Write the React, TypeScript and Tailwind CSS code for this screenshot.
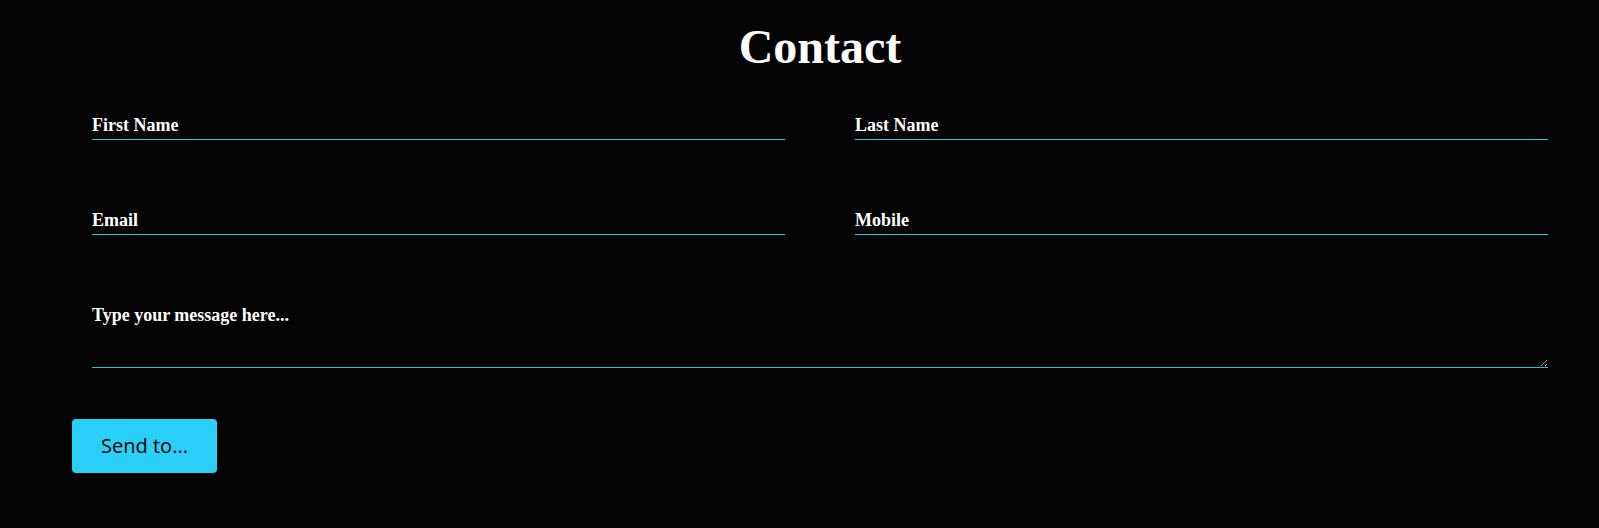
import React from 'react';

const serif = "font-['Liberation_Serif','Times_New_Roman',serif]";

function Field({ placeholder }: { placeholder: string }) {
  return (
    <input
      type="text"
      placeholder={placeholder}
      className={`block w-full h-[25px] bg-transparent border-0 border-b border-[#2bc3ea] outline-none px-0 pt-0 pb-[4px] text-[18px] leading-[20px] font-bold text-white placeholder:text-white placeholder:opacity-100 ${serif}`}
    />
  );
}

export default function App() {
  return (
    <section className="min-h-[528px] bg-[#040404] pl-[72px] pr-[51px] pt-[20px]">
      <div className="pl-[20px]">
        <h1 className={`text-center text-[48px] leading-[53px] font-bold text-white ${serif}`}>Contact</h1>

        <form className="mt-[42px]">
          <div className="grid grid-cols-2 gap-x-[70px] gap-y-[70px]">
            <Field placeholder="First Name" />
            <Field placeholder="Last Name" />
            <Field placeholder="Email" />
            <Field placeholder="Mobile" />
          </div>
          <textarea
            placeholder="Type your message here..."
            className={`block mt-[70px] w-full h-[63px] bg-transparent border-0 border-b border-[#2bc3ea] outline-none p-0 text-[18px] leading-[20px] font-bold text-white placeholder:text-white placeholder:opacity-100 ${serif}`}
          />
        </form>
      </div>

      <button
        type="button"
        className="block mt-[51px] w-[145px] h-[54px] rounded-[4px] bg-[#2ad0f7] text-black text-[20px] leading-none font-['Open_Sans',Tahoma,sans-serif]"
      >
        Send to...
      </button>
    </section>
  );
}
